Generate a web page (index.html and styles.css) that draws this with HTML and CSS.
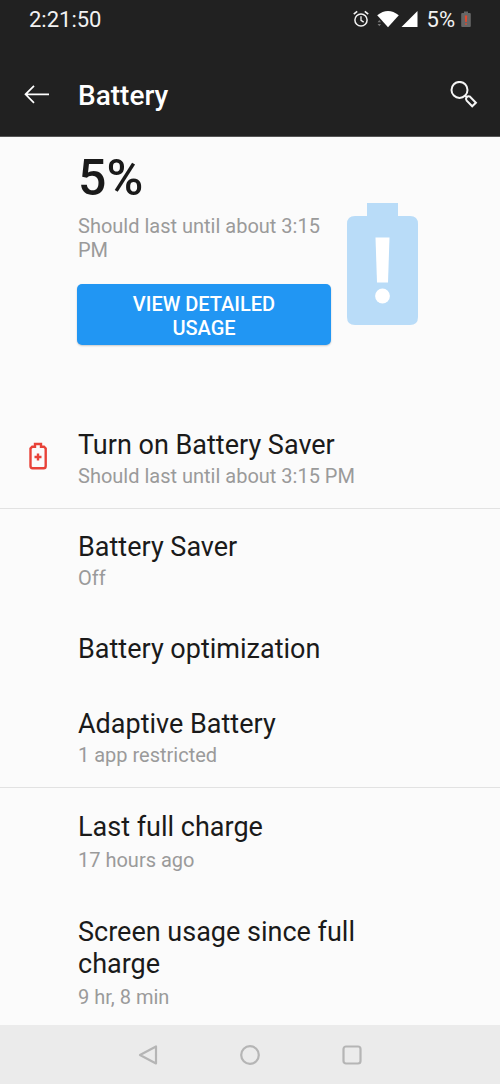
FILE: index.html
```html
<!DOCTYPE html>
<html lang="en">
<head>
<meta charset="utf-8">
<meta name="viewport" content="width=device-width, initial-scale=1">
<title>Battery</title>
<link rel="stylesheet" href="styles.css">
</head>
<body>
<header class="top">
  <div class="status">
    <span>2:21:50</span>
    <div class="status-icons">
      <svg width="16" height="18" viewBox="0 0 16 18" fill="none" stroke="#f2f2f2"><circle cx="8" cy="10" r="6.1" stroke-width="1.5"/><path d="M8 6.3v4l2.7 1.8" stroke-width="1.3"/><path d="M.8 4.2 4.2 1.4M15.2 4.2l-3.4-2.8" stroke-width="1.7"/></svg>
      <svg class="wifi" width="22" height="18" viewBox="0 0 22 18"><path d="M.2 5.3Q11-3.2 21.800 5.3L11 17.300z" fill="#fff"/><path d="M.6 12.200 2.300 10l1.700 2.200zM.6 14l1.700 2.200L4 14z" fill="#777"/></svg>
      <svg class="signal" width="17" height="18" viewBox="0 0 17 18"><path d="M16.500 1v16H.5z" fill="#fff"/></svg>
      <span>5%</span>
      <svg class="level" width="10" height="18" viewBox="0 0 10 18"><path d="M3 1.500h4V3h1.800q1 0 1 1v12q0 1-1 1H1.200q-1 0-1-1V4q0-1 1-1H3z" fill="#666"/><path d="M3.800 5.500h2.400L5.800 12H4.200zM4.200 13.200h1.600v1.600H4.200z" fill="#e5482d"/></svg>
    </div>
  </div>
  <div class="bar">
    <button class="icon-button back" aria-label="Back"><svg width="26" height="20" viewBox="0 0 26 20" fill="none" stroke="#fff" stroke-width="1.700"><path d="M25 9.300H1.500M10 .8 1.500 9.300l8.500 8.500"/></svg></button>
    <h1>Battery</h1>
    <button class="icon-button" aria-label="Search"><svg width="28" height="28" viewBox="0 0 28 28" fill="none" stroke="#f5f5f5" stroke-width="2"><circle cx="9.500" cy="8.900" r="8"/><path d="m15.200 14.600 2 2"/><path d="M16.500 16.300q1.800-1.700 3.600-.6l5.800 6-3.700 3.600-5.500-5.600q-1.300-1.900-.2-3.400z"/></svg></button>
  </div>
</header>
<main>
  <section class="hero">
    <div class="summary">
      <p class="percent">5%</p>
      <p class="sub">Should last until about 3:15 PM</p>
      <button class="usage">View detailed usage</button>
    </div>
    <svg class="battery" width="71" height="122" viewBox="0 0 71 122"><path d="M20 0h31v13h12q8 0 8 8v93q0 8-8 8H8q-8 0-8-8V21q0-8 8-8h12z" fill="#b9dcf8"/><path d="M28.500 34.500h14l-1.500 45H30z" fill="#fff"/><circle cx="35.500" cy="93" r="7.400" fill="#fff"/></svg>
  </section>
  <section class="group">
    <a class="row" href="#saver-on">
      <svg class="row-icon" width="18" height="28" viewBox="0 0 18 28" fill="none" stroke="#e84238" stroke-width="2.400"><path d="M6 2h6v2.700h3l1.700 1.800V24q0 2.300-2 2.300H3.500q-2 0-2-2.300V6.500l1.700-1.800H6z"/><path d="M9 11.500v7M5.500 15h7"/></svg>
      <span class="title">Turn on Battery Saver</span>
      <span class="sub">Should last until about 3:15 PM</span>
    </a>
  </section>
  <section class="group">
    <a class="row" href="#saver"><span class="title">Battery Saver</span><span class="sub">Off</span></a>
    <a class="row" href="#optimization"><span class="title">Battery optimization</span></a>
    <a class="row" href="#adaptive"><span class="title">Adaptive Battery</span><span class="sub">1 app restricted</span></a>
  </section>
  <section class="group stats">
    <div class="row"><span class="title">Last full charge</span><span class="sub">17 hours ago</span></div>
    <div class="row"><span class="title">Screen usage since full charge</span><span class="sub">9 hr, 8 min</span></div>
  </section>
</main>
<nav class="nav" aria-label="System">
  <button class="icon-button" aria-label="Back"><svg width="22" height="22" viewBox="0 0 22 22" fill="none" stroke="#b5b5b5" stroke-width="2.200" stroke-linejoin="round"><path d="M19 2.500v17L3 11z"/></svg></button>
  <button class="icon-button" aria-label="Home"><svg width="22" height="22" viewBox="0 0 22 22" fill="none" stroke="#b5b5b5" stroke-width="2.200"><circle cx="11" cy="11" r="8.800"/></svg></button>
  <button class="icon-button" aria-label="Recent apps"><svg width="22" height="22" viewBox="0 0 22 22" fill="none" stroke="#b5b5b5" stroke-width="2.200"><rect x="2.500" y="2.500" width="17" height="17" rx="2.500"/></svg></button>
</nav>
</body>
</html>
```
FILE: styles.css
```css
* { box-sizing: border-box; margin: 0; }

body {
  min-height: 100vh;
  display: flex;
  flex-direction: column;
  background: #fbfbfb;
  color: #1a1a1a;
  font-family: Roboto, "Liberation Sans", sans-serif;
}

.top {
  background: #212121;
  border-bottom: 1px solid #555;
  color: #fff;
}

.status {
  display: flex;
  justify-content: space-between;
  align-items: center;
  height: 38px;
  padding: 0 29px;
  font-size: 22px;
  color: #f2f2f2;
}

.status-icons { display: flex; align-items: center; }
.wifi { margin-left: 8px; }
.signal { margin: 0 9px 0 2px; }
.level { margin-left: 6px; }

.bar {
  display: flex;
  align-items: center;
  padding: 35px 22px 19px 24px;
}

.icon-button {
  display: flex;
  padding: 0;
  border: 0;
  background: none;
}

.back { margin-right: 28px; }

h1 {
  flex: 1;
  padding-top: 2px;
  font-size: 28px;
  line-height: 42px;
  font-weight: 500;
}

main { flex: 1; }

.hero {
  display: flex;
  align-items: flex-start;
  gap: 16px;
  padding: 11px 82px 62px 77px;
}

.summary { flex: 1; }

.percent {
  padding-left: 1px;
  font-size: 50px;
  line-height: 60px;
  font-weight: 500;
}

.hero .sub { margin: 6px 0 22px; padding-left: 1px; }

.sub {
  font-size: 20px;
  line-height: 24px;
  color: #9a9a9a;
}

.usage {
  width: 100%;
  padding: 8px 48px 5px;
  border: 0;
  border-radius: 5px;
  background: #2196f3;
  box-shadow: 0 1px 2px #0003;
  color: #fff;
  font: 500 20px/24px Roboto, "Liberation Sans", sans-serif;
  text-transform: uppercase;
}

.battery { flex: none; margin-top: 55px; }

.group {
  display: flex;
  flex-direction: column;
  gap: 43px;
  padding: 22px 78px 20px;
  border-bottom: 1px solid #e2e2e2;
}

.row {
  position: relative;
  display: flex;
  flex-direction: column;
  gap: 3px;
  color: inherit;
  text-decoration: none;
}

.row-icon {
  position: absolute;
  left: -49px;
  top: 13px;
}

.title { font-size: 27px; line-height: 32px; }

.stats {
  gap: 44px;
  padding-top: 23px;
  padding-bottom: 12px;
  border: 0;
}

.stats .row { gap: 5px; }

.nav {
  display: flex;
  justify-content: center;
  gap: 80px;
  padding: 19px 0 18px;
  background: #ebebeb;
}
```
